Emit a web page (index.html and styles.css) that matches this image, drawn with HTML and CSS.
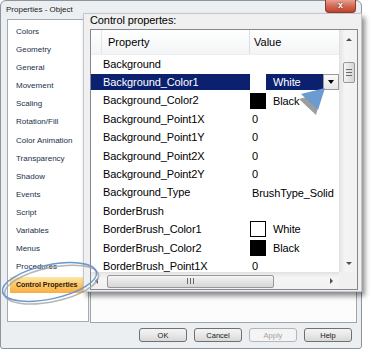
FILE: index.html
```html
<!DOCTYPE html>
<html>
<head>
	<title>Properties - Object</title>
	<link rel="stylesheet" href="styles.css">
</head>
<body>

<div class="window">
	<div class="titlebar">
		<span class="title">Properties - Object</span>
		<span class="close">x</span>
	</div>

	<div class="client">
		<ul class="nav">
			<li>Colors</li>
			<li>Geometry</li>
			<li>General</li>
			<li>Movement</li>
			<li>Scaling</li>
			<li>Rotation/Fill</li>
			<li>Color Animation</li>
			<li>Transparency</li>
			<li>Shadow</li>
			<li>Events</li>
			<li>Script</li>
			<li>Variables</li>
			<li>Menus</li>
			<li>Procedures</li>
			<li class="active">Control Properties</li>
		</ul>
		<div class="page"></div>
	</div>

	<div class="buttons">
		<button>OK</button>
		<button>Cancel</button>
		<button class="off">Apply</button>
		<button>Help</button>
	</div>

	<!-- magnified part of the property page -->
	<div class="callout">
		<div class="label">Control propertes:</div>
		<div class="grid">
			<div class="data">
				<div class="head">
					<span class="corner"></span>
					<span class="hprop">Property</span>
					<span class="hval">Value</span>
				</div>
				<div class="row"><span class="name">Background</span><span class="val"></span></div>
				<div class="row sel">
					<span class="name">Background_Color1</span>
					<span class="val"><span class="swatch white"></span><span class="ctext">White</span><span class="drop"></span></span>
				</div>
				<div class="row"><span class="name">Background_Color2</span><span class="val"><span class="swatch black"></span><span class="ctext">Black</span></span></div>
				<div class="row"><span class="name">Background_Point1X</span><span class="val"><span class="num">0</span></span></div>
				<div class="row"><span class="name">Background_Point1Y</span><span class="val"><span class="num">0</span></span></div>
				<div class="row"><span class="name">Background_Point2X</span><span class="val"><span class="num">0</span></span></div>
				<div class="row"><span class="name">Background_Point2Y</span><span class="val"><span class="num">0</span></span></div>
				<div class="row"><span class="name">Background_Type</span><span class="val"><span class="num">BrushType_Solid</span></span></div>
				<div class="row"><span class="name">BorderBrush</span><span class="val"></span></div>
				<div class="row"><span class="name">BorderBrush_Color1</span><span class="val"><span class="swatch white"></span><span class="ctext">White</span></span></div>
				<div class="row"><span class="name">BorderBrush_Color2</span><span class="val"><span class="swatch black"></span><span class="ctext">Black</span></span></div>
				<div class="row"><span class="name">BorderBrush_Point1X</span><span class="val"><span class="num">0</span></span></div>
			</div>
			<div class="vscroll">
				<span class="arr up"></span>
				<span class="vthumb"><i></i><i></i><i></i></span>
				<span class="arr down"></span>
			</div>
			<div class="hscroll">
				<span class="arr left"></span>
				<span class="hthumb"><i></i><i></i><i></i></span>
				<span class="arr right"></span>
			</div>
			<div class="sizer"></div>
		</div>
	</div>
</div>

<svg class="marks" width="372" height="352" viewBox="0 0 372 352">
	<g transform="rotate(-12 49.5 282)">
		<ellipse cx="51" cy="285" rx="48" ry="17" fill="none" stroke="#a3a3a3" stroke-width="1.6" opacity="0.8"/>
		<ellipse cx="49.5" cy="282" rx="48" ry="17" fill="none" stroke="#6a98cc" stroke-width="1.5"/>
	</g>
	<polygon points="322,93 299,99 316,115" fill="#8c8c8c" opacity="0.85"/>
	<polygon points="325,88 301,94 318,110" fill="#6c9bd0"/>
</svg>

</body>
</html>
```

FILE: styles.css
```css
body {
	margin: 0;
	background: #fff;
	font-family: "Liberation Sans", Arial, sans-serif;
	color: #000;
}
.window {
	position: relative;
	box-sizing: border-box;
	width: 362px;
	height: 349px;
	border: 1px solid #8e949b;
	border-radius: 6px 6px 3px 3px;
	background: #eceff2;
	display: flex;
	flex-direction: column;
}
.titlebar {
	height: 18px;
	display: flex;
	align-items: flex-start;
	flex: none;
}
.title {
	padding-left: 5px;
	font-size: 8px;
	line-height: 18px;
	color: #1b1b1b;
}
.close {
	margin: -1px 5px 0 auto;
	width: 31px;
	height: 13px;
	box-sizing: border-box;
	border: 1px solid #8f3b2c;
	border-top: none;
	border-radius: 0 0 4px 4px;
	background: linear-gradient(#e7a093, #d26a55 50%, #c0442c);
	color: #fff;
	font-size: 9px;
	font-weight: bold;
	line-height: 11px;
	text-align: center;
	text-shadow: 0 0 2px #5a1a10;
}
.client {
	display: flex;
	padding: 0 4px 0 6px;
	flex: none;
}
.nav {
	list-style: none;
	margin: 0;
	padding: 4px 0 0;
	box-sizing: border-box;
	width: 82px;
	height: 303px;
	border: 1px solid #a4abb4;
	background: #fff;
}
.nav li {
	height: 16px;
	margin: 0 4px 2.1px 2px;
	padding-left: 6px;
	font-size: 8px;
	line-height: 16px;
	color: #22304a;
	white-space: nowrap;
}
.nav li.active {
	background: linear-gradient(#fde8a8, #fcc76a 50%, #f9ad42);
	font-weight: bold;
	font-size: 7px;
	color: #2a1a08;
}
.page {
	flex: 1;
	margin-left: 1px;
	height: 304px;
	box-sizing: border-box;
	border: 1px solid #a0a5ab;
	background: #fcfcfc;
}
.buttons {
	display: flex;
	justify-content: flex-end;
	gap: 7px;
	padding: 5px 9px 0 0;
}
.buttons button {
	width: 48px;
	height: 14px;
	padding: 0;
	border: 1px solid #707070;
	border-radius: 3px;
	background: linear-gradient(#f4f4f4, #e8e8e8 50%, #d8d8d8);
	font-family: "Liberation Sans", Arial, sans-serif;
	font-size: 7.5px;
	color: #1a1a1a;
}
.buttons button.off {
	border-color: #b2b6ba;
	background: #f4f4f4;
	color: #a3a3a3;
}

/* magnified page overlay */
.callout {
	position: absolute;
	left: 82px;
	top: 12px;
	width: 279px;
	height: 279px;
	box-sizing: border-box;
	border: 1px solid #c3c7cc;
	background: #f0f0f0;
	box-shadow: 3px 4px 5px rgba(0,0,0,.45);
	padding: 0 0 0 6px;
}
.label {
	font-size: 11px;
	line-height: 13px;
	height: 12px;
	letter-spacing: -0.1px;
}
.grid {
	margin-top: 3px;
	width: 268px;
	height: 261px;
	box-sizing: border-box;
	border: 1px solid #828790;
	background: #fff;
	display: grid;
	grid-template-columns: 248px 18px;
	grid-template-rows: 242px 17px;
}
.data {
	overflow: hidden;
	font-size: 11px;
}
.head {
	display: flex;
	height: 24.6px;
	background: linear-gradient(#fff, #f3f4f6);
	border-bottom: 1px solid #eceef0;
	box-sizing: border-box;
	line-height: 24px;
}
.corner {
	width: 10px;
	border-right: 1px solid #e3e5e8;
}
.hprop {
	width: 141px;
	padding-left: 6px;
	border-right: 1px solid #dadde1;
}
.hval {
	padding-left: 4px;
}
.row {
	display: flex;
	height: 18.4px;
	box-sizing: border-box;
	border-top: 1px solid transparent;
	border-bottom: 1px solid transparent;
	background-clip: padding-box;
	line-height: 16px;
	white-space: nowrap;
	letter-spacing: -0.1px;
}
.name {
	width: 146px;
	padding-left: 12px;
}
.val {
	flex: 1;
	display: flex;
	align-items: center;
	padding-left: 1px;
}
.ctext {
	margin-left: 7px;
}
.num {
	margin-left: 2px;
}
.swatch {
	display: block;
	flex: none;
	width: 16px;
	height: 16px;
	box-sizing: border-box;
	border: 1px solid #000;
}
.swatch.white {
	background-color: #fff;
}
.swatch.black {
	background-color: #000;
}
.row.sel {
	background-color: #0b2170;
	color: #fff;
}
.row.sel .swatch {
	border-color: #fff;
}
.drop {
	margin-left: auto;
	flex: none;
	width: 16px;
	height: 16px;
	box-sizing: border-box;
	border: 1px solid #9a9a9a;
	background: linear-gradient(#fafafa, #e6e6e6);
	display: flex;
	align-items: center;
	justify-content: center;
}
.drop::after {
	content: "";
	border-left: 3.5px solid transparent;
	border-right: 3.5px solid transparent;
	border-top: 4px solid #000;
}
.vscroll {
	background: linear-gradient(90deg, #e6e6e6, #f5f5f5 30%, #f1f1f1);
	border-left: 1px solid #e2e2e2;
	display: flex;
	flex-direction: column;
	align-items: center;
	padding-top: 8px;
}
.hscroll {
	background: linear-gradient(#e6e6e6, #f5f5f5 30%, #f1f1f1);
	border-top: 1px solid #e2e2e2;
	display: flex;
	align-items: center;
	padding-left: 4px;
}
.sizer {
	background: #f0f0f0;
}
.arr {
	width: 0;
	height: 0;
}
.arr.up {
	border-left: 3px solid transparent;
	border-right: 3px solid transparent;
	border-bottom: 3px solid #505050;
}
.arr.down {
	margin-top: auto;
	margin-bottom: 7px;
	border-left: 3px solid transparent;
	border-right: 3px solid transparent;
	border-top: 3px solid #505050;
}
.arr.left {
	border-top: 3px solid transparent;
	border-bottom: 3px solid transparent;
	border-right: 3px solid #505050;
}
.arr.right {
	margin-left: auto;
	margin-right: 6px;
	border-top: 3px solid transparent;
	border-bottom: 3px solid transparent;
	border-left: 3px solid #505050;
}
.vthumb {
	margin-top: 21px;
	width: 12px;
	height: 21px;
	box-sizing: border-box;
	border: 1px solid #989898;
	border-radius: 2px;
	background: linear-gradient(90deg, #f6f6f6, #e4e4e4 50%, #d6d6d6);
	display: flex;
	flex-direction: column;
	align-items: center;
	justify-content: center;
	gap: 2px;
}
.vthumb i {
	width: 6px;
	height: 1px;
	background: #6a6a6a;
}
.hthumb {
	margin-left: 9px;
	width: 167px;
	height: 13px;
	box-sizing: border-box;
	border: 1px solid #989898;
	border-radius: 2px;
	background: linear-gradient(#f6f6f6, #e4e4e4 50%, #d6d6d6);
	display: flex;
	align-items: center;
	justify-content: center;
	gap: 2px;
}
.hthumb i {
	width: 1px;
	height: 6px;
	background: #6a6a6a;
}
.marks {
	position: absolute;
	left: 0;
	top: 0;
	pointer-events: none;
}
```
